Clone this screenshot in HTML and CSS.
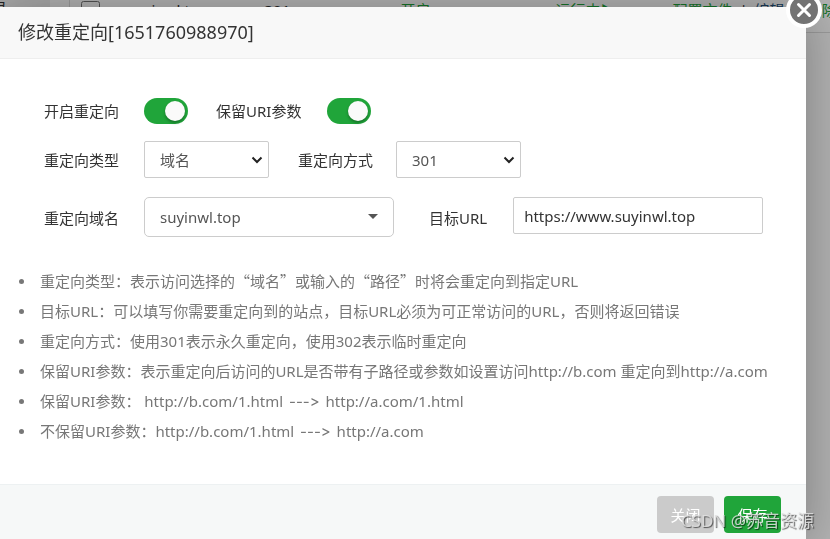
FILE: index.html
```html
<!DOCTYPE html>
<html lang="zh-CN">
<head>
    <meta charset="UTF-8">
    <meta name="viewport" content="width=device-width, initial-scale=1.0">
    <title>修改重定向</title>
    <link rel="stylesheet" href="styles.css">
</head>
<body>
    <div class="page">
        <div class="sidebar">录</div>
        <div class="main">
            <table class="site-table">
                <tr>
                    <td class="col-check"><input type="checkbox" aria-label="选择"></td>
                    <td class="col-name">suyinwl.top</td>
                    <td class="col-type">301</td>
                    <td class="col-open green">开启</td>
                    <td class="col-state green">运行中▶</td>
                    <td class="col-action"><a class="green" href="#">配置文件</a> <span class="sep">|</span> <a class="blue" href="#">编辑</a> <span class="sep">|</span> <a class="green" href="#">删除</a></td>
                </tr>
            </table>
        </div>
    </div>

    <div class="mask">
        <form class="dialog" role="dialog" aria-labelledby="dialog-title">
            <button type="button" class="dialog-close" aria-label="关闭窗口">
                <svg viewBox="0 0 36 36" width="36" height="36">
                    <circle cx="18" cy="18" r="16" fill="#737373" stroke="#fff" stroke-width="4"/>
                    <path d="M12.5 12.5 L23.5 23.5 M23.5 12.5 L12.5 23.5" stroke="#fff" stroke-width="3" stroke-linecap="round"/>
                </svg>
            </button>
            <h1 class="dialog-title" id="dialog-title">修改重定向[1651760988970]</h1>

            <div class="dialog-body">
                <div class="line">
                    <label class="name" for="open">开启重定向</label>
                    <input class="switch" type="checkbox" id="open" checked>
                    <label class="name-mid" for="keep-uri">保留URI参数</label>
                    <input class="switch" type="checkbox" id="keep-uri" checked>
                </div>
                <div class="line">
                    <label class="name" for="type">重定向类型</label>
                    <div class="select-box">
                        <select id="type">
                            <option>域名</option>
                            <option>路径</option>
                        </select>
                        <svg class="chevron" viewBox="0 0 12 8" width="12" height="8"><path d="M1.5 1.5 L6 6 L10.5 1.5"/></svg>
                    </div>
                    <label class="name-mid name-mode" for="mode">重定向方式</label>
                    <div class="select-box">
                        <select id="mode">
                            <option>301</option>
                            <option>302</option>
                        </select>
                        <svg class="chevron" viewBox="0 0 12 8" width="12" height="8"><path d="M1.5 1.5 L6 6 L10.5 1.5"/></svg>
                    </div>
                </div>
                <div class="line line-last">
                    <label class="name" for="domain">重定向域名</label>
                    <div class="select-box select-wide">
                        <select id="domain">
                            <option>suyinwl.top</option>
                        </select>
                        <svg class="caret" viewBox="0 0 10 5" width="10" height="5"><path d="M0 0 H10 L5 5 Z"/></svg>
                    </div>
                    <label class="name-mid" for="target">目标URL</label>
                    <input class="target" type="text" id="target" value="https://www.suyinwl.top">
                </div>

                <ul class="help">
                    <li>重定向类型：表示访问选择的<span class="cjk">“域名”</span>或输入的<span class="cjk">“路径”</span>时将会重定向到指定URL</li>
                    <li>目标URL：可以填写你需要重定向到的站点，目标URL必须为可正常访问的URL，否则将返回错误</li>
                    <li>重定向方式：使用301表示永久重定向，使用302表示临时重定向</li>
                    <li>保留URI参数：表示重定向后访问的URL是否带有子路径或参数如设置访问http://b.com 重定向到http://a.com</li>
                    <li>保留URI参数： http://b.com/1.html <span class="arrow">---&gt;</span> http://a.com/1.html</li>
                    <li>不保留URI参数：http://b.com/1.html <span class="arrow">---&gt;</span> http://a.com</li>
                </ul>
            </div>

            <div class="dialog-footer">
                <button type="button" class="btn btn-close">关闭</button>
                <button type="submit" class="btn btn-save">保存</button>
            </div>
        </form>
    </div>
    <div class="watermark">CSDN @苏音资源</div>
</body>
</html>
```

FILE: styles.css
```css
* {
    box-sizing: border-box;
}
body {
    margin: 0;
    min-height: 100vh;
    overflow: hidden;
    font-family: "Noto Sans", "Noto Sans CJK SC", sans-serif;
    font-size: 15px;
    color: #333;
    background: #fff;
}
button, input, select {
    font-family: inherit;
    font-size: 15px;
}

/* page behind the dialog */
.page {
    display: flex;
    height: 33px;
}
.sidebar {
    width: 50px;
    overflow: hidden;
    line-height: 16px;
    text-indent: -8px;
    background: #f0f0f0;
}
.main {
    flex: 1;
    min-width: 0;
    padding-left: 19px;
}
.site-table {
    width: 100%;
    table-layout: fixed;
    border-collapse: collapse;
    border-left: 1px solid #ddd;
    border-bottom: 1px solid #ddd;
    line-height: 20px;
    white-space: nowrap;
}
.site-table td {
    padding: 0 0 12px;
    vertical-align: top;
}
.site-table input {
    display: block;
    width: 19px;
    height: 19px;
    margin: 1px 0 0 11px;
}
.col-check { width: 58px; }
.col-name { width: 137px; }
.col-type { width: 136px; }
.col-open { width: 155px; }
.col-state { width: 117px; }
.green {
    color: #20a53a;
}
.blue {
    color: #23527c;
}
.sep {
    margin: 0 3px;
}
.page a {
    text-decoration: none;
}

.mask {
    position: fixed;
    inset: 0;
    padding: 7px 24px 0 0;
    background: rgba(0, 0, 0, 0.3);
}
.dialog {
    position: relative;
    background: #fff;
    box-shadow: 1px 1px 50px rgba(0, 0, 0, 0.3);
}
.dialog-close {
    position: absolute;
    top: -15px;
    right: -16px;
    width: 36px;
    height: 36px;
    padding: 0;
    border: 0;
    background: none;
    cursor: pointer;
}
.dialog-title {
    margin: 0;
    padding: 0 18px;
    font-size: 18px;
    font-weight: normal;
    line-height: 51px;
    background: #f8f8f8;
    border-bottom: 1px solid #eee;
}
.dialog-body {
    padding: 33px 18px 38px;
}
.line {
    display: flex;
    align-items: center;
    height: 37px;
    margin: 0 18px 12px 26px;
    white-space: nowrap;
}
.line-last {
    height: 40px;
    margin-top: 19px;
    margin-bottom: 29px;
}
.name {
    width: 100px;
}
.name-mid {
    padding: 0 26px 0 28px;
}
.name-mode {
    width: 127px;
    padding: 0 0 0 29px;
}
.line-last .name-mid {
    padding-left: 35px;
}
.switch {
    appearance: none;
    display: flex;
    align-items: center;
    justify-content: flex-end;
    width: 44px;
    height: 26px;
    margin: 0;
    padding: 3px;
    border-radius: 13px;
    background: #20a53a;
}
.switch::before {
    content: "";
    width: 20px;
    height: 20px;
    border-radius: 50%;
    background: #fafafa;
    box-shadow: 0 2px 3px rgba(0, 0, 0, 0.3);
}
.switch:not(:checked) {
    justify-content: flex-start;
    background: #ccc;
}
.select-box {
    position: relative;
    width: 125px;
}
.select-box select {
    appearance: none;
    display: block;
    width: 100%;
    height: 37px;
    padding: 0 15px;
    color: #555;
    background: #fff;
    border: 1px solid #ccc;
    border-radius: 2px;
}
.select-wide {
    width: 250px;
}
.select-wide select {
    height: 40px;
    border-radius: 5px;
}
.chevron {
    position: absolute;
    top: 15px;
    right: 6px;
    fill: none;
    stroke: #222;
    stroke-width: 2;
    pointer-events: none;
}
.caret {
    position: absolute;
    top: 17px;
    right: 16px;
    fill: #555;
    pointer-events: none;
}
.target {
    align-self: flex-start;
    width: 250px;
    height: 37px;
    padding: 0 10px;
    color: #333;
    border: 1px solid #ccc;
    border-radius: 2px;
}
.help {
    margin: 0;
    padding: 0;
    line-height: 30px;
    color: #777;
    list-style: none;
}
.help li::before {
    content: "";
    display: inline-block;
    width: 5px;
    height: 5px;
    margin: 0 16px 0 1px;
    vertical-align: 3px;
    border-radius: 50%;
    background: #777;
}
.cjk {
    font-family: "Noto Sans CJK SC", sans-serif;
}
.arrow {
    margin: 0 2px;
    font-family: Inter, sans-serif;
    font-feature-settings: "calt" 0;
    line-height: 1;
}
.dialog-footer {
    display: flex;
    justify-content: flex-end;
    gap: 10px;
    padding: 11px 25px;
    background: #f6f8f8;
    border-top: 1px solid #edf1f2;
}
.btn {
    width: 57px;
    height: 37px;
    padding: 0;
    border: 0;
    border-radius: 4px;
    color: #fff;
    cursor: pointer;
}
.btn-close {
    background: #cbcbcb;
}
.btn-save {
    background: #20a53a;
}
.watermark {
    position: fixed;
    right: 16px;
    bottom: 6px;
    font-size: 17px;
    line-height: 24px;
    color: rgba(225, 225, 225, 0.85);
    text-shadow: 1px 1px 1px rgba(0, 0, 0, 0.6);
    pointer-events: none;
}
```
